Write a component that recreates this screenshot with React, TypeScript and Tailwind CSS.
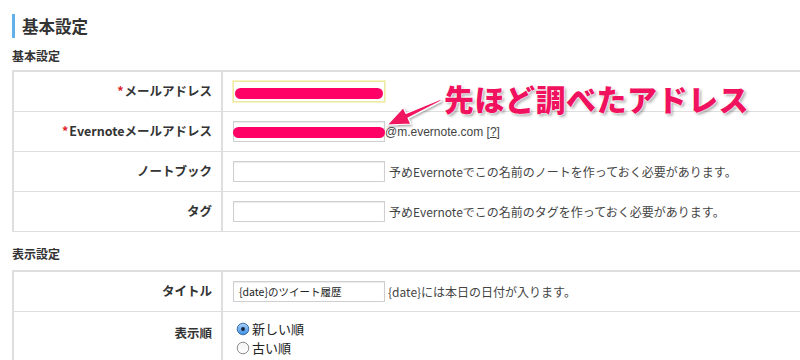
import type { ReactNode } from "react";

const jp = "font-['Noto_Sans_CJK_JP',sans-serif]";

function Row({ label, req, children, h = "h-[40px]" }: { label: string; req?: boolean; children?: ReactNode; h?: string }) {
  return (
    <div className={`grid grid-cols-[207px_1fr] border-b border-[#dedede] ${h}`}>
      <div className="flex items-center justify-end pr-[9px] text-[12.5px] font-bold text-[#333]">
        {req && <span className="text-[#e0252b] mr-[1px]">*</span>}
        {label}
      </div>
      <div className="flex items-center border-l-2 border-[#dedede] pl-[10px]">{children}</div>
    </div>
  );
}

function TextBox({ focus, value, scribble }: { focus?: boolean; value?: string; scribble?: string }) {
  return (
    <div
      className={`relative shrink-0 w-[152px] h-[21px] bg-white flex items-center pl-[5px] text-[10.5px] text-[#222] ${
        focus ? "border border-[#ece9a2] ring-1 ring-[#f7f3c4]" : "border border-[#cfcfcf] shadow-[inset_0_1px_1px_rgba(0,0,0,0.08)]"
      }`}
    >
      {value}
      {scribble && <div className={`absolute h-[11px] rounded-full bg-[#ff0066] ${scribble}`} />}
    </div>
  );
}

function Radio({ on, label }: { on?: boolean; label: string }) {
  return (
    <div className="flex items-center gap-[2px] h-[19px] text-[13px] text-[#222]">
      <svg width="14" height="14" viewBox="0 0 14 14">
        <defs>
          <linearGradient id="rb" x1="0" y1="0" x2="0" y2="1">
            <stop offset="0" stopColor="#a9d2fa" />
            <stop offset="1" stopColor="#3c8de0" />
          </linearGradient>
          <linearGradient id="rg" x1="0" y1="0" x2="0" y2="1">
            <stop offset="0" stopColor="#f2f2f2" />
            <stop offset="1" stopColor="#ffffff" />
          </linearGradient>
        </defs>
        <circle cx="7" cy="7" r="5.8" fill={on ? "url(#rb)" : "url(#rg)"} stroke={on ? "#3f6fae" : "#8d8d8d"} strokeWidth="1" />
        {on && <circle cx="7" cy="7" r="1.9" fill="#152238" />}
      </svg>
      <span>{label}</span>
    </div>
  );
}

const hint = "text-[12px] text-[#444] ml-[4px] whitespace-nowrap";

export default function App() {
  return (
    <div className={`relative w-[800px] h-[360px] overflow-hidden bg-white ${jp}`}>
      <div className="pt-[14px] pl-[12px]">
        <h1 className="flex items-center h-[24px] border-l-[3px] border-[#62b0ea] pl-[7px] text-[16.5px] font-bold text-[#333]">基本設定</h1>

        <h2 className="mt-[11px] h-[14px] leading-[14px] text-[12px] font-bold text-[#333]">基本設定</h2>
        <div className="mt-[7px] w-[900px] border-t-2 border-l-2 border-[#dedede]">
          <Row label="メールアドレス" req>
            <TextBox focus scribble="left-[1px] right-[1px] top-[6px]" />
          </Row>
          <Row label="Evernoteメールアドレス" req>
            <TextBox scribble="-left-[1px] -right-[1px] top-[5px]" />
            <span className="text-[12px] text-[#444] font-['Liberation_Sans',sans-serif]">
              @m.evernote.com [<span className="underline">?</span>]
            </span>
          </Row>
          <Row label="ノートブック">
            <TextBox />
            <span className={hint}>予めEvernoteでこの名前のノートを作っておく必要があります。</span>
          </Row>
          <Row label="タグ">
            <TextBox />
            <span className={hint}>予めEvernoteでこの名前のタグを作っておく必要があります。</span>
          </Row>
        </div>

        <h2 className="mt-[15px] h-[14px] leading-[14px] text-[12px] font-bold text-[#333]">表示設定</h2>
        <div className="mt-[9px] w-[900px] border-t-2 border-l-2 border-[#dedede]">
          <Row label="タイトル">
            <TextBox value="{date}のツイート履歴" />
            <span className="text-[12px] text-[#444] ml-[3px]">{"{date}には本日の日付が入ります。"}</span>
          </Row>
          <div className="grid grid-cols-[207px_1fr] h-[60px]">
            <div className="flex items-start justify-end pt-[12px] pr-[9px] text-[12.5px] font-bold text-[#333]">表示順</div>
            <div className="border-l-2 border-[#dedede] pl-[13px] pt-[7px] flex flex-col">
              <Radio on label="新しい順" />
              <Radio label="古い順" />
            </div>
          </div>
        </div>
      </div>

      <svg className="absolute left-[375px] top-[95px]" width="80" height="40" viewBox="0 0 80 40">
        <defs>
          <filter id="sh" x="-20%" y="-20%" width="150%" height="150%">
            <feDropShadow dx="1" dy="1.5" stdDeviation="1" floodColor="#000" floodOpacity="0.35" />
          </filter>
        </defs>
        <polygon
          points="12,30 35.8,29 33.05,23.1 66.4,5.9 65.6,4.1 30.95,18.5 28.2,12.6"
          fill="#f0125e"
          stroke="#fff"
          strokeWidth="1.2"
          strokeLinejoin="round"
          filter="url(#sh)"
        />
      </svg>

      <div className="absolute left-[444px] top-[79px] text-[30px] leading-[38px] font-black tracking-[0.5px] text-[#f0125e] whitespace-nowrap [text-shadow:0_0_2px_#fff,0_0_2px_#fff,0_0_1px_#fff,2px_2px_3px_rgba(0,0,0,0.35)]">
        先ほど調べたアドレス
      </div>
    </div>
  );
}
